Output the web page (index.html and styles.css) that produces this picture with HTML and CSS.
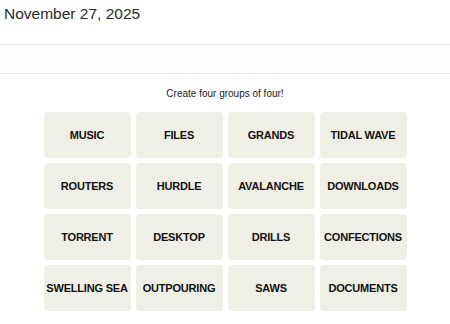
FILE: index.html
```html
<!DOCTYPE html>
<html lang="en">
<head>
  <meta charset="UTF-8">
  <meta name="viewport" content="width=device-width, initial-scale=1.0">
  <title>Connections</title>
  <link rel="stylesheet" href="styles.css">
</head>
<body>
  <header class="date-bar">
    <div class="date-label">November 27, 2025</div>
  </header>
  <div class="toolbar"></div>

  <main class="game">
    <p class="prompt">Create four groups of four!</p>
    <div class="board">
      <button class="tile">Music</button>
      <button class="tile">Files</button>
      <button class="tile">Grands</button>
      <button class="tile">Tidal Wave</button>
      <button class="tile">Routers</button>
      <button class="tile">Hurdle</button>
      <button class="tile">Avalanche</button>
      <button class="tile">Downloads</button>
      <button class="tile">Torrent</button>
      <button class="tile">Desktop</button>
      <button class="tile">Drills</button>
      <button class="tile">Confections</button>
      <button class="tile">Swelling Sea</button>
      <button class="tile">Outpouring</button>
      <button class="tile">Saws</button>
      <button class="tile">Documents</button>
    </div>
  </main>
</body>
</html>
```

FILE: styles.css
```css
:root {
  --tile-bg: #efefe6;
  --text-dark: #121212;
  --line: #e6e6e6;
}

body {
  margin: 0;
  font-family: 'Liberation Sans', Arial, sans-serif;
  background: #fff;
  color: var(--text-dark);
}

.date-bar {
  height: 44px;
  border-bottom: 1px solid var(--line);
}

.date-label {
  padding: 4px 0 0 4px;
  font-size: 15.5px;
  line-height: 20px;
  color: #2a2a2a;
}

.toolbar {
  height: 28px;
  background: #fdfdfd;
  border-bottom: 1px solid var(--line);
}

.game {
  display: flex;
  flex-direction: column;
  align-items: center;
}

.prompt {
  margin: 13px 0 0;
  font-size: 10px;
  line-height: 14px;
  color: #222;
}

.board {
  display: grid;
  grid-template-columns: repeat(4, 87px);
  grid-auto-rows: 46px;
  gap: 5px;
  margin-top: 11px;
}

.tile {
  background: var(--tile-bg);
  border: none;
  border-radius: 4px;
  padding: 0;
  font-family: inherit;
  font-size: 11px;
  font-weight: bold;
  letter-spacing: -0.2px;
  text-transform: uppercase;
  color: var(--text-dark);
  cursor: pointer;
}
```
